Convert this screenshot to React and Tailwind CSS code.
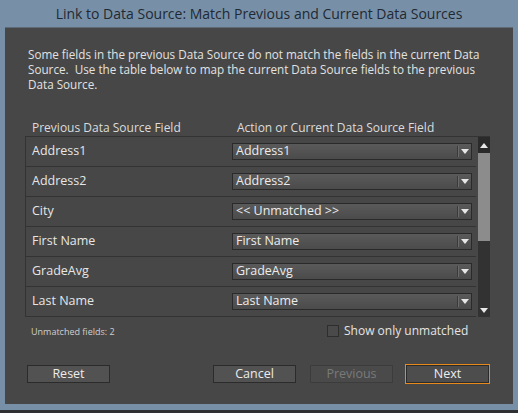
import React from 'react';

const rows = [
    { field: 'Address1', value: 'Address1' },
    { field: 'Address2', value: 'Address2' },
    { field: 'City', value: '<< Unmatched >>' },
    { field: 'First Name', value: 'First Name' },
    { field: 'GradeAvg', value: 'GradeAvg' },
    { field: 'Last Name', value: 'Last Name' },
];

const Arrow = ({ up }) => (
    <svg width="8" height="5" viewBox="0 0 8 5" className="block">
        <path d={up ? 'M0 5 L4 0 L8 5 Z' : 'M0 0 L8 0 L4 5 Z'} fill="#e8e8e8" />
    </svg>
);

const Dropdown = ({ value }) => (
    <div className="flex h-[17px] w-[240px] items-center border border-[#2a2a2a] bg-gradient-to-b from-[#5a5a5a] to-[#4b4b4b]">
        <span className="flex-1 pl-[3px] text-[12.5px] leading-none text-[#ececec] whitespace-nowrap">{value}</span>
        <div className="flex h-full items-center">
            <div className="h-[11px] w-px bg-[#3a3a3a]" />
            <div className="h-[11px] w-px bg-[#6a6a6a]" />
            <div className="flex w-[12px] justify-center">
                <Arrow />
            </div>
        </div>
    </div>
);

const Button = ({ children, disabled, primary }) => (
    <button
        className={
            primary
                ? 'h-[20px] w-[85px] border border-[#e8891c] bg-[#4d4d4d] p-0 text-[12.5px] leading-none text-[#ececec] shadow-[inset_0_0_0_1px_#2b2b2b]'
                : disabled
                ? 'h-[18px] w-[83px] border border-[#3c3c3c] bg-[#4a4a4a] p-0 text-[12.5px] leading-none text-[#7a7a7a]'
                : 'h-[18px] w-[83px] border border-[#2b2b2b] bg-[#525252] p-0 text-[12.5px] leading-none text-[#ececec]'
        }
    >
        {children}
    </button>
);

export default function App() {
    return (
        <div
            className="flex h-[413px] w-[518px] flex-col bg-[#7890a7]"
            style={{ fontFamily: '"Open Sans", "Noto Sans", sans-serif' }}
        >
            <div className="flex h-[27px] items-center justify-center text-[14px] leading-none text-[#1e2934]">
                Link to Data Source: Match Previous and Current Data Sources
            </div>

            <div className="mx-[5px] flex h-[377px] flex-col border-t border-[#5d6b78] bg-[#474747] px-[20px]">
                <div className="mt-[19px] pl-[3px] text-[11.7px] leading-[15px] text-[#e2e2e2]">
                    <div className="h-[15px] whitespace-nowrap">Some fields in the previous Data Source do not match the fields in the current Data</div>
                    <div className="h-[15px] whitespace-nowrap">Source.&nbsp; Use the table below to map the current Data Source fields to the previous</div>
                    <div className="h-[15px] whitespace-nowrap">Data Source.</div>
                </div>

                <div className="mt-[27px] flex h-[17px] items-center text-[12px] leading-none text-[#dcdcdc]">
                    <span className="w-[212px] pl-[7px]">Previous Data Source Field</span>
                    <span>Action or Current Data Source Field</span>
                </div>

                <div className="flex w-[465px] border-t border-l border-[#333333]">
                    <div className="flex-1">
                        {rows.map((r) => (
                            <div key={r.field} className="flex h-[30px] items-center border-b border-[#333333] pr-[4px]">
                                <span className="w-[206px] pl-[6px] text-[12.5px] leading-none text-[#e6e6e6]">{r.field}</span>
                                <Dropdown value={r.value} />
                            </div>
                        ))}
                    </div>
                    <div className="ml-[2px] flex w-[12px] flex-col bg-[#323232]">
                        <div className="flex h-[16px] items-center justify-center bg-[#2a2a2a]">
                            <Arrow up />
                        </div>
                        <div className="h-[88px] bg-[#8c8c8c]" />
                        <div className="flex-1" />
                        <div className="flex h-[14px] items-center justify-center">
                            <Arrow />
                        </div>
                    </div>
                </div>

                <div className="mt-[7px] flex h-[14px] items-center">
                    <span className="w-[302px] pl-[6px] text-[9px] leading-none text-[#cfcfcf]">Unmatched fields: 2</span>
                    <div className="h-[12px] w-[12px] border border-[#2e2e2e] bg-[#4a4a4a]" />
                    <span className="ml-[5px] text-[12px] leading-none text-[#e4e4e4]">Show only unmatched</span>
                </div>

                <div className="mt-[22px] flex items-center">
                    <div className="ml-[2px]">
                        <Button>Reset</Button>
                    </div>
                    <div className="ml-[103px]">
                        <Button>Cancel</Button>
                    </div>
                    <div className="ml-[14px]">
                        <Button disabled>Previous</Button>
                    </div>
                    <div className="ml-[12px]">
                        <Button primary>Next</Button>
                    </div>
                </div>
            </div>

            <div className="flex-1" />
            <div className="h-[3px] bg-[#2f3033]" />
        </div>
    );
}
